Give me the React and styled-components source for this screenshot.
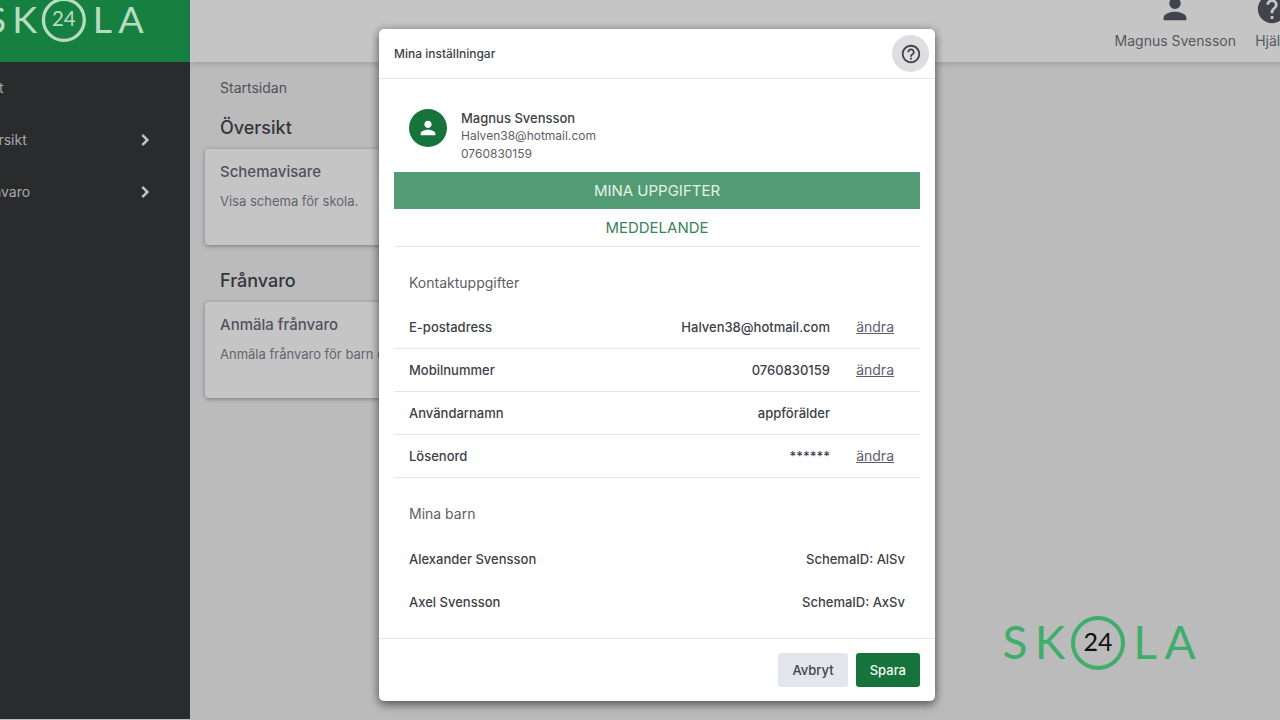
import React, { useState } from "react";
import styled, { createGlobalStyle, css } from "styled-components";
import { MdPerson, MdHelp, MdHelpOutline, MdChevronRight } from "react-icons/md";

const GlobalStyle = createGlobalStyle`
  * { box-sizing: border-box; }
  body {
    margin: 0;
    font-family: Inter, "Liberation Sans", sans-serif;
    font-size: 14px;
    line-height: 24px;
    color: #3d3f47;
  }
  button { font: inherit; border: 0; cursor: pointer; }
  h1, h2, h3, p { margin: 0; font-weight: 400; }
`;

const Viewport = styled.div`
  display: flex;
  height: 100vh;
  overflow: hidden;
  background: #bbbbbb;
  border-bottom: 1px solid #b7bdba;
`;

/* the page is panned a little, so its edges bleed out of the viewport */
const Page = styled.div`
  position: relative;
  flex: 1;
  display: flex;
  margin: -10px -84px 0 -50px;
`;

const Sidebar = styled.aside`
  flex: none;
  width: 240px;
  background: #292b2d;
`;
const Brand = styled.div`
  height: 72px;
  padding: 7px 0 0 37px;
  background: #168041;
`;
const NavItem = styled.a`
  display: flex;
  align-items: center;
  justify-content: space-between;
  height: 52px;
  padding: 0 34px 0 22px;
  color: #a7a9ab;
  text-decoration: none;
  svg { color: #c0c1c3; }
  path:last-child { stroke: currentColor; stroke-width: 1; }
`;

const Content = styled.div`
  flex: 1;
  display: flex;
  flex-direction: column;
`;
const Header = styled.header`
  display: flex;
  justify-content: flex-end;
  gap: 19px;
  height: 72px;
  padding: 2px 75px 0 0;
  background: #c5c5c5;
  box-shadow: 0 2px 6px rgba(80, 80, 110, 0.25);
`;
const HeaderLink = styled.a`
  display: flex;
  flex-direction: column;
  align-items: center;
  gap: 5px;
  line-height: 20px;
  color: #57585e;
  text-decoration: none;
  svg { color: #42434c; }
`;
const Main = styled.main`
  display: flex;
  flex-direction: column;
  align-items: flex-start;
  gap: 24px;
  padding: 14px 15px;
`;
const Crumb = styled.p`
  margin-bottom: -8px;
  padding-left: 15px;
  color: #505157;
`;
const Group = styled.section`
  h2 {
    margin-bottom: 9px;
    padding-left: 15px;
    font-size: 18px;
    font-weight: 500;
    color: #34353b;
  }
`;
const Card = styled.article`
  width: 300px;
  height: 96px;
  padding: 11px 15px;
  border-radius: 4px;
  background: #c5c5c5;
  box-shadow: 0 1px 4px rgba(60, 60, 90, 0.5);
  h3 {
    margin-bottom: 5px;
    font-size: 15px;
    font-weight: 500;
    color: #53505e;
  }
  p { font-size: 13px; color: #66636f; }
`;

const Overlay = styled.div`
  position: absolute;
  inset: 0;
  display: flex;
  justify-content: center;
  align-items: flex-start;
  padding-top: 39px;
`;
const Dialog = styled.div`
  width: 556px;
  border-radius: 5px;
  background: #fff;
  box-shadow: 0 4px 10px rgba(0, 0, 0, 0.45), 0 0 8px rgba(0, 0, 0, 0.2);
`;
const DialogHead = styled.div`
  display: flex;
  align-items: center;
  justify-content: space-between;
  height: 50px;
  padding: 0 6px 0 15px;
  border-bottom: 1px solid #e6e6e8;
  h1 { font-size: 12px; font-weight: 500; }
`;
const HelpButton = styled.button`
  display: grid;
  place-items: center;
  width: 37px;
  height: 37px;
  padding: 0;
  border-radius: 50%;
  background: #dedee0;
  color: #42434c;
`;
const DialogBody = styled.div`
  padding: 0 15px 15px;
`;
const Profile = styled.div`
  display: flex;
  gap: 14px;
  padding: 30px 15px 9px;
  line-height: 18px;
  p { font-size: 12px; color: #5d5e66; }
  strong { display: block; font-size: 13px; font-weight: 500; }
`;
const Avatar = styled.div`
  display: grid;
  place-items: center;
  width: 38px;
  height: 38px;
  border-radius: 50%;
  background: #17733c;
  color: #fff;
`;
const Tabs = styled.div`
  display: flex;
  flex-direction: column;
  border-bottom: 1px solid #e6e6e8;
`;
const Tab = styled.button`
  height: 37px;
  font-size: 15px;
  background: transparent;
  color: #3a8359;
  ${({ $active }) => $active && css`
    background: #539b74;
    color: #e3f2e9;
  `}
`;
const SectionTitle = styled.h2`
  padding: 24px 15px 11px;
  font-size: 14px;
  color: #5d5e66;
`;
const Table = styled.table`
  width: 100%;
  border-spacing: 0;
  font-size: 13px;
  th, td {
    height: 43px;
    padding: 0;
    font-weight: 500;
    ${({ $lined }) => $lined && "border-bottom: 1px solid #e6e6e8;"}
  }
  th { padding-left: 15px; text-align: left; }
  td { text-align: right; }
`;
const ActionCell = styled.td`
  width: 90px;
  && { padding-right: 26px; }
`;
const PlainCell = styled.td`
  && { padding-right: 15px; }
`;
const EditLink = styled.a`
  font-size: 14px;
  font-weight: 400;
  color: #625b70;
`;
const DialogFoot = styled.div`
  display: flex;
  justify-content: flex-end;
  gap: 8px;
  padding: 14px 15px;
  border-top: 1px solid #e6e6e8;
`;
const Button = styled.button`
  height: 34px;
  padding: 0 14px;
  border-radius: 3px;
  font-size: 13px;
  font-weight: 500;
  background: ${({ $primary }) => ($primary ? "#17733c" : "#e4e6ed")};
  color: ${({ $primary }) => ($primary ? "#f3faf5" : "#42434c")};
`;

const Watermark = styled.div`
  position: absolute;
  right: 84px;
  bottom: 49px;
`;

const LogoSvg = styled.svg`
  display: block;
  font-family: Lato, sans-serif;
`;

function Logo({ width, color, numberColor }) {
  return (
    <LogoSvg width={width} viewBox="0 0 192 56" role="img" aria-label="Skola24">
      <g fill={color} fontSize="46" textAnchor="middle">
        <text x="11" y="44">S</text>
        <text x="46" y="44">K</text>
        <text x="141" y="44">L</text>
        <text x="176" y="44">A</text>
      </g>
      <circle cx="94" cy="28" r="25" fill="none" stroke={color} strokeWidth="4" />
      <text x="94" y="36" fill={numberColor} fontSize="25" textAnchor="middle">24</text>
    </LogoSvg>
  );
}

const CONTACT = [
  { label: "E-postadress", value: "Halven38@hotmail.com", editable: true },
  { label: "Mobilnummer", value: "0760830159", editable: true },
  { label: "Användarnamn", value: "appförälder", editable: false },
  { label: "Lösenord", value: "******", editable: true },
];

const CHILDREN = [
  { name: "Alexander Svensson", schema: "AlSv" },
  { name: "Axel Svensson", schema: "AxSv" },
];

const TABS = ["MINA UPPGIFTER", "MEDDELANDE"];

export default function App() {
  const [tab, setTab] = useState(TABS[0]);

  return (
    <>
      <GlobalStyle />
      <Viewport>
        <Page>
          <Sidebar>
            <Brand>
              <Logo width={157} color="#b7dcc2" numberColor="#b7dcc2" />
            </Brand>
            <nav>
              <NavItem href="#start">Start</NavItem>
              <NavItem href="#oversikt">Översikt <MdChevronRight size={22} /></NavItem>
              <NavItem href="#franvaro">Frånvaro <MdChevronRight size={22} /></NavItem>
            </nav>
          </Sidebar>

          <Content>
            <Header>
              <HeaderLink href="#profil"><MdPerson size={34} />Magnus Svensson</HeaderLink>
              <HeaderLink href="#hjalp"><MdHelp size={34} />Hjälp</HeaderLink>
            </Header>
            <Main>
              <Crumb>Startsidan</Crumb>
              <Group>
                <h2>Översikt</h2>
                <Card>
                  <h3>Schemavisare</h3>
                  <p>Visa schema för skola.</p>
                </Card>
              </Group>
              <Group>
                <h2>Frånvaro</h2>
                <Card>
                  <h3>Anmäla frånvaro</h3>
                  <p>Anmäla frånvaro för barn elev.</p>
                </Card>
              </Group>
            </Main>
          </Content>

          <Overlay>
            <Dialog role="dialog" aria-labelledby="dialog-title">
              <DialogHead>
                <h1 id="dialog-title">Mina inställningar</h1>
                <HelpButton aria-label="Hjälp"><MdHelpOutline size={22} /></HelpButton>
              </DialogHead>
              <DialogBody>
                <Profile>
                  <Avatar><MdPerson size={22} /></Avatar>
                  <div>
                    <strong>Magnus Svensson</strong>
                    <p>Halven38@hotmail.com</p>
                    <p>0760830159</p>
                  </div>
                </Profile>
                <Tabs role="tablist">
                  {TABS.map((t) => (
                    <Tab key={t} role="tab" aria-selected={t === tab} $active={t === tab} onClick={() => setTab(t)}>
                      {t}
                    </Tab>
                  ))}
                </Tabs>

                <SectionTitle>Kontaktuppgifter</SectionTitle>
                <Table $lined>
                  <tbody>
                    {CONTACT.map((row) => (
                      <tr key={row.label}>
                        <th scope="row">{row.label}</th>
                        <td>{row.value}</td>
                        <ActionCell>{row.editable && <EditLink href="#andra">ändra</EditLink>}</ActionCell>
                      </tr>
                    ))}
                  </tbody>
                </Table>

                <SectionTitle>Mina barn</SectionTitle>
                <Table>
                  <tbody>
                    {CHILDREN.map((child) => (
                      <tr key={child.name}>
                        <th scope="row">{child.name}</th>
                        <PlainCell>SchemaID: {child.schema}</PlainCell>
                      </tr>
                    ))}
                  </tbody>
                </Table>
              </DialogBody>
              <DialogFoot>
                <Button>Avbryt</Button>
                <Button $primary>Spara</Button>
              </DialogFoot>
            </Dialog>
          </Overlay>
        </Page>
      </Viewport>
      <Watermark>
        <Logo width={192} color="#3fae6a" numberColor="#111" />
      </Watermark>
    </>
  );
}
